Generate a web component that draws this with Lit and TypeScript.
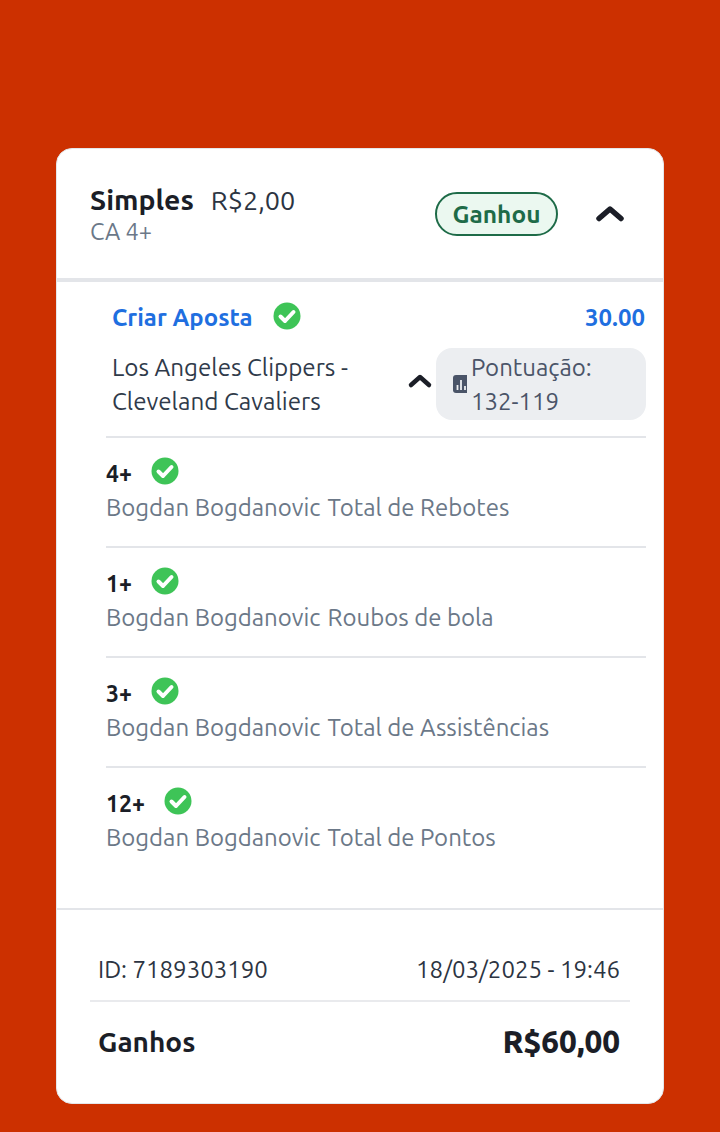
import { LitElement, html, css, svg } from "lit";
import { customElement } from "lit/decorators.js";

const check = svg`<svg class="chk" viewBox="0 0 28 28" width="28" height="28"><circle cx="14" cy="14" r="13.5" fill="#3ec457"/><path d="M7.5 14.5l4.5 4.5 8.5-9" fill="none" stroke="#fff" stroke-width="4" stroke-linecap="round" stroke-linejoin="round"/></svg>`;

const legs = [
  ["4+", "Total de Rebotes"],
  ["1+", "Roubos de bola"],
  ["3+", "Total de Assistências"],
  ["12+", "Total de Pontos"],
];

@customElement("app-root")
export class AppRoot extends LitElement {
  static styles = css`
    :host { display: block; height: 1132px; background: #cc3000; padding: 148px 56px 0; box-sizing: border-box; font-family: Ubuntu, "Noto Sans", "Open Sans", sans-serif; color: #1b1e27; }
    .card { background: #fff; border: 1px solid #e4e6ea; border-radius: 16px; height: 956px; box-sizing: border-box; display: flex; flex-direction: column; overflow: hidden; }
    .head { height: 133px; box-sizing: border-box; border-bottom: 4px solid #e3e5e9; padding: 34px 33px 0; display: flex; align-items: flex-start; }
    .htext { flex: 1; }
    .title { display: flex; gap: 17px; align-items: baseline; font-size: 27px; line-height: 34px; color: #2c3442; }
    .title b { font-weight: 700; font-size: 28.4px; color: #1b1e27; }
    .sub { font-size: 23.5px; line-height: 28px; color: #6b7888; }
    .badge { margin-top: 9px; height: 44px; width: 123px; box-sizing: border-box; border: 2px solid #1e6b48; border-radius: 22px; background: #ebf8f0; color: #1e6b48; font-weight: 700; font-size: 24.5px; display: flex; align-items: center; justify-content: center; }
    .chev { margin: 20px 5px 0 37px; }
    .body { padding: 0 17px 0 49px; }
    .row1 { display: flex; align-items: center; padding: 17px 0 0 6px; height: 36px; }
    .ca { color: #1f6fe0; font-weight: 700; font-size: 24px; }
    .row1 .chk { margin-left: 21px; margin-top: -2px; }
    .odd { margin-left: auto; margin-right: 1px; color: #1f6fe0; font-weight: 700; font-size: 24px; }
    .match { display: flex; align-items: flex-start; padding: 13px 0 16px 6px; border-bottom: 2px solid #e3e5e9; }
    .names { flex: 1; font-size: 24.2px; line-height: 34px; color: #2f3a4a; margin-top: 2px; }
    .score { width: 210px; height: 72px; box-sizing: border-box; background: #eceef1; border-radius: 16px; display: flex; align-items: center; padding-left: 17px; gap: 4px; font-size: 24px; line-height: 34px; color: #4a5468; }
    .score span { margin-top: 2px; }
    .mchev { margin: 23px 3px 0 0; }
    .leg { height: 110px; box-sizing: border-box; border-bottom: 2px solid #e3e5e9; padding-top: 19px; }
    .leg:last-child { border-bottom: none; }
    .ln { display: flex; align-items: center; gap: 19px; font-weight: 700; font-size: 23px; height: 28px; }
    .ln span { margin-top: 4px; }
    .desc { margin-top: 7px; font-size: 24px; line-height: 32px; color: #6b7888; }
    .desc span { margin-left: 7px; }
    .spacer { flex: 1; }
    .foot { border-top: 2px solid #e3e5e9; padding: 0 33px; height: 195px; box-sizing: border-box; }
    .meta { display: flex; justify-content: space-between; padding: 28px 10px 0 8px; height: 92px; align-items: center; font-size: 24px; color: #2c3442; border-bottom: 2px solid #e9eaed; box-sizing: border-box; }
    .tot { display: flex; justify-content: space-between; padding: 0 10px 0 8px; align-items: center; height: 78px; font-weight: 700; font-size: 28px; }
    .tot b { font-size: 31.5px; }
  `;
  render() {
    return html`<div class="card">
      <div class="head">
        <div class="htext">
          <div class="title"><b>Simples</b><span>R$2,00</span></div>
          <div class="sub">CA 4+</div>
        </div>
        <div class="badge">Ganhou</div>
        <svg class="chev" width="30" height="20" viewBox="0 0 30 20"><path d="M4 15.5L15 6l11 9.5" fill="none" stroke="#1b1e27" stroke-width="5.5" stroke-linecap="round" stroke-linejoin="round"/></svg>
      </div>
      <div class="body">
        <div class="row1"><span class="ca">Criar Aposta</span>${check}<span class="odd">30.00</span></div>
        <div class="match">
          <div class="names">Los Angeles Clippers -<br />Cleveland Cavaliers</div>
          <svg class="mchev" width="26" height="18" viewBox="0 0 26 18"><path d="M4 14L13 6l9 8" fill="none" stroke="#1b1e27" stroke-width="4.5" stroke-linecap="round" stroke-linejoin="round"/></svg>
          <div class="score">
            <svg width="14" height="18" viewBox="0 0 14 18"><path d="M3 0h11v18H3a3 3 0 0 1-3-3V3a3 3 0 0 1 3-3z" fill="#4a5468"/><path d="M4.500 15v-5M8 15V5M12 15v-4" stroke="#eceef1" stroke-width="1.800"/></svg>
            <span>Pontuação:<br />132-119</span>
          </div>
        </div>
        ${legs.map(([n, d]) => html`<div class="leg"><div class="ln"><span>${n}</span>${check}</div><div class="desc">Bogdan Bogdanovic<span>${d}</span></div></div>`)}
      </div>
      <div class="spacer"></div>
      <div class="foot">
        <div class="meta"><span>ID: 7189303190</span><span>18/03/2025 - 19:46</span></div>
        <div class="tot"><span>Ganhos</span><b>R$60,00</b></div>
      </div>
    </div>`;
  }
}
